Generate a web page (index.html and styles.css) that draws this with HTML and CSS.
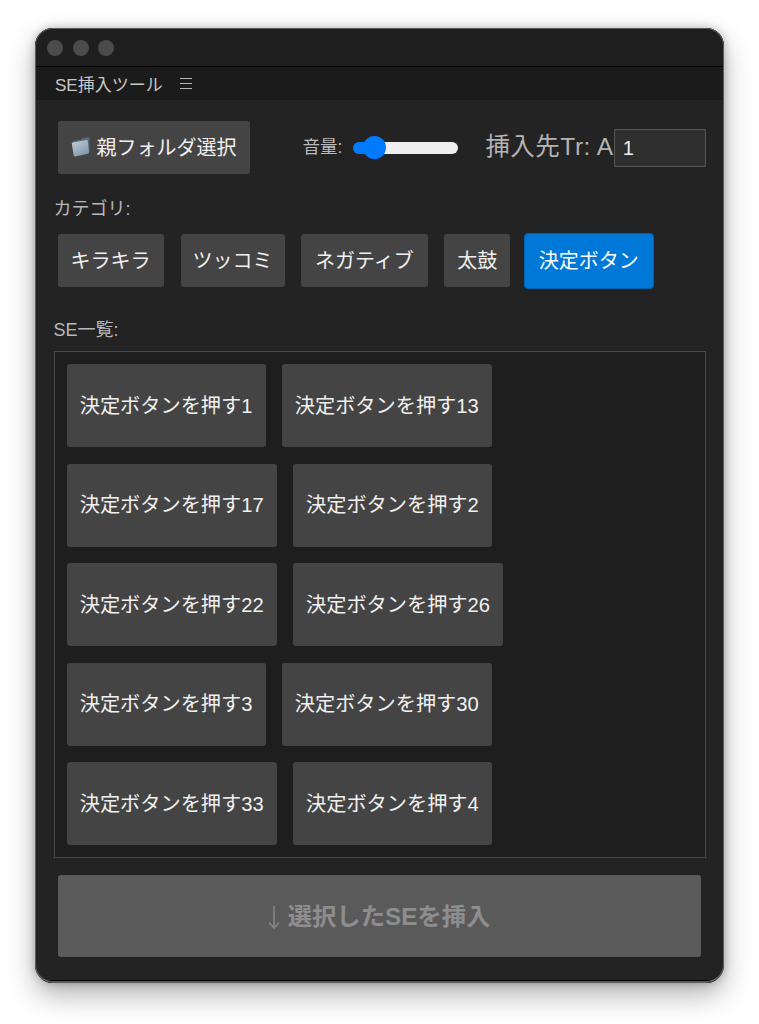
FILE: index.html
```html
<!DOCTYPE html>
<html lang="ja">
    <head>
        <meta charset="UTF-8" />
        <meta name="viewport" content="width=device-width, initial-scale=1.0" />
        <title>SE挿入ツール</title>
        <link rel="stylesheet" href="styles.css">
    </head>
    <body>
        <div class="window">
            <!-- Title bar -->
            <div class="titlebar">
                <span class="dot"></span>
                <span class="dot"></span>
                <span class="dot"></span>
            </div>

            <!-- Panel tab -->
            <div class="tabbar">
                <span class="tab-title">SE挿入ツール</span>
                <svg class="menu-icon" viewBox="0 0 12 11" width="12" height="11">
                    <path d="M0 .5H12M0 5.5H12M0 10.5H12" stroke="#b5b5b5" stroke-width="1" fill="none" />
                </svg>
            </div>

            <div class="content">
                <div class="toolbar">
                    <button class="btn folder-btn">
                        <svg class="folder-icon" viewBox="0 0 19 21" width="19" height="21">
                            <defs>
                                <linearGradient id="folderFront" x1="0" y1="0" x2="0.6" y2="1">
                                    <stop offset="0" stop-color="#c4d0da" />
                                    <stop offset="1" stop-color="#8298aa" />
                                </linearGradient>
                            </defs>
                            <path d="M2 5 L10 3.5 L12 2 L17 1 Q18.5 .8 18.5 2.2 L18.5 16 L3 19 Z" fill="#56697a" />
                            <path d="M1.5 6.5 L15.5 4 Q16.7 3.9 16.8 5 L18 16.5 Q18 17.6 17 17.8 L4 20.4 Q2.9 20.5 2.7 19.4 L.8 7.8 Q.7 6.8 1.5 6.5 Z" fill="url(#folderFront)" />
                        </svg>
                        <span>親フォルダ選択</span>
                    </button>
                    <label class="volume-label">音量:</label>
                    <input class="volume" type="range" min="0" max="100" value="12" />
                    <label class="track-label">挿入先Tr: A</label>
                    <input class="track-input" type="text" value="1" />
                </div>

                <div class="label category-label">カテゴリ:</div>
                <div class="categories">
                    <button class="btn">キラキラ</button>
                    <button class="btn narrow">ツッコミ</button>
                    <button class="btn wide">ネガティブ</button>
                    <button class="btn">太鼓</button>
                    <button class="btn active">決定ボタン</button>
                </div>

                <div class="label list-label">SE一覧:</div>
                <div class="se-list">
                    <button class="btn se-btn">決定ボタンを押す1</button>
                    <button class="btn se-btn">決定ボタンを押す13</button>
                    <button class="btn se-btn">決定ボタンを押す17</button>
                    <button class="btn se-btn">決定ボタンを押す2</button>
                    <button class="btn se-btn">決定ボタンを押す22</button>
                    <button class="btn se-btn">決定ボタンを押す26</button>
                    <button class="btn se-btn">決定ボタンを押す3</button>
                    <button class="btn se-btn">決定ボタンを押す30</button>
                    <button class="btn se-btn">決定ボタンを押す33</button>
                    <button class="btn se-btn">決定ボタンを押す4</button>
                </div>

                <button class="insert-btn" disabled>
                    <svg class="arrow-icon" viewBox="0 0 12 23" width="12" height="23">
                        <path d="M6 0V22M1 16.5L6 22L11 16.5" stroke="#868686" stroke-width="1.6" fill="none" />
                    </svg>
                    <span>選択したSEを挿入</span>
                </button>
            </div>
        </div>
    </body>
</html>
```

FILE: styles.css
```css
* {
    box-sizing: border-box;
}

body {
    margin: 0;
    padding: 28px 35px 0;
    height: 1024px;
    overflow: hidden;
    background-color: #fff;
    font-family: "Liberation Sans", "Noto Sans CJK JP", sans-serif;
}

.window {
    display: flex;
    flex-direction: column;
    width: 689px;
    height: 955px;
    border-radius: 18px;
    overflow: hidden;
    background-color: #232323;
    box-shadow: 0 12px 28px rgba(0, 0, 0, 0.3), 0 0 8px rgba(0, 0, 0, 0.25);
    position: relative;
}

.window::after {
    content: "";
    position: absolute;
    inset: 0;
    border-radius: 18px;
    border: 1.5px solid #5c5c5c;
    border-bottom-width: 2px;
    pointer-events: none;
}

.titlebar {
    display: flex;
    align-items: center;
    gap: 9.5px;
    height: 39px;
    padding: 1px 0 0 12px;
    background-color: #1e1e1e;
    border-bottom: 1.5px solid #000;
}

.dot {
    width: 16px;
    height: 16px;
    border-radius: 50%;
    background-color: #4b4b4b;
}

.tabbar {
    display: flex;
    align-items: center;
    height: 33px;
    padding-left: 20px;
    background-color: #1b1b1b;
}

.tab-title {
    font-size: 17px;
    color: #c8c8c8;
}

.menu-icon {
    margin-left: 17px;
}

.content {
    flex: 1;
    padding: 21px 18px 0 18.5px;
    border-bottom: 3px solid #000;
}

.btn {
    height: 53px;
    padding: 0 13px 3px;
    border: none;
    border-radius: 3px;
    background-color: #444;
    color: #f0f0f0;
    font-family: inherit;
    font-size: 20px;
    white-space: nowrap;
    flex-shrink: 0;
}

.btn.narrow {
    margin-left: 0.5px;
    padding: 0 12px 3px;
}

.btn.wide {
    padding: 0 14px 3px;
}

.btn.active {
    height: 56px;
    margin-left: -3px;
    padding: 0 14px 3px;
    background-color: #0078d7;
    border: 1.5px solid #0062ad;
    border-radius: 4px;
    color: #fff;
}

.toolbar {
    display: flex;
    align-items: center;
    padding-left: 4px;
}

.folder-btn {
    display: flex;
    align-items: center;
    padding-left: 13px;
    gap: 7px;
}

.folder-icon {
    flex-shrink: 0;
}

.volume-label {
    margin-left: 53px;
    padding-bottom: 4px;
    font-size: 17.5px;
    color: #bbb;
    white-space: nowrap;
    flex-shrink: 0;
}

.volume {
    -webkit-appearance: none;
    appearance: none;
    flex-shrink: 0;
    width: 105px;
    height: 12px;
    margin: 0 0 0 11px;
    border-radius: 6px;
    background: linear-gradient(to right, #007aff 22px, #efefef 22px);
}

.volume::-webkit-slider-thumb {
    -webkit-appearance: none;
    width: 23px;
    height: 23px;
    border-radius: 50%;
    background-color: #007aff;
}

.track-label {
    flex-shrink: 0;
    margin-left: 27px;
    padding-bottom: 6px;
    font-size: 24.5px;
    letter-spacing: 0.5px;
    color: #b4b4b4;
    white-space: nowrap;
}

.track-input {
    width: 92px;
    height: 38px;
    padding: 2px 8px 0;
    border: 1.5px solid #555;
    background-color: #2f2f2f;
    color: #eee;
    font-family: inherit;
    font-size: 20px;
    flex-shrink: 0;
}

.label {
    font-size: 18px;
    color: #b8b8b8;
}

.category-label {
    margin-top: 20px;
}

.categories {
    display: flex;
    align-items: center;
    gap: 16.5px;
    height: 53px;
    margin-top: 14px;
    padding-left: 4px;
}

.list-label {
    margin-top: 28px;
}

.se-list {
    display: flex;
    flex-wrap: wrap;
    align-content: flex-start;
    gap: 16.5px 16px;
    height: 506.5px;
    margin-top: 10px;
    padding: 12px;
    border: 1.5px solid #4a4a4a;
    background-color: #1e1e1e;
}

.se-btn {
    height: 83px;
    padding: 0 13.2px 3px;
    font-size: 20.2px;
}

.insert-btn {
    display: flex;
    justify-content: center;
    align-items: center;
    gap: 8px;
    width: 643px;
    height: 82px;
    margin: 17.5px 0 0 4px;
    padding-bottom: 5px;
    border: none;
    border-radius: 3px;
    background-color: #5a5a5a;
    color: #8e8e8e;
    font-family: inherit;
    font-size: 24.3px;
    font-weight: bold;
}

.arrow-icon {
    flex-shrink: 0;
    margin-top: 6px;
}
```
